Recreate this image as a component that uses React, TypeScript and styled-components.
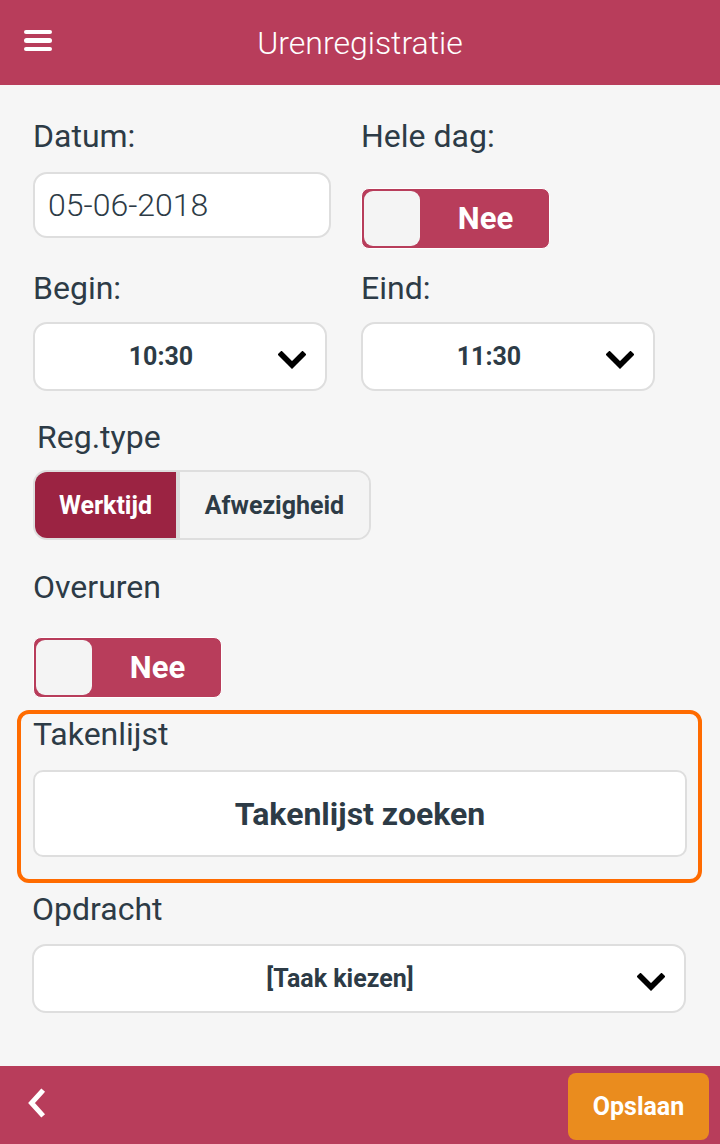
import React, { useState } from 'react'
import styled, { createGlobalStyle } from 'styled-components'

const GlobalStyle = createGlobalStyle`
  html, body {
    margin: 0;
    padding: 0;
    background: #f6f6f6;
    font-family: Roboto, "Noto Sans", sans-serif;
  }
  * { box-sizing: border-box; }
`

const Page = styled.div`
  display: flex;
  flex-direction: column;
  height: 1144px;
  width: 720px;
  color: #2d3b46;
`

const Header = styled.header`
  height: 85px;
  flex-shrink: 0;
  background: #b83d5b;
  display: flex;
  align-items: center;
  padding: 0 24px;
`

const MenuButton = styled.div`
  display: flex;
  flex-direction: column;
  gap: 4px;
  width: 28px;
  margin-top: -4px;
  span {
    display: block;
    height: 4.5px;
    border-radius: 3px;
    background: #fff;
  }
`

const Title = styled.h1`
  flex: 1;
  margin: 0 28px 0 0;
  text-align: center;
  color: #fff;
  font-weight: 300;
  font-size: 32px;
  line-height: 38px;
`

const Content = styled.main`
  flex: 1;
  padding-top: 32px;
`

const Grid = styled.div`
  display: grid;
  grid-template-columns: 294px 294px;
  column-gap: 34px;
  row-gap: 20px;
  padding: 0 33px;
`

const Field = styled.div`
  display: flex;
  flex-direction: column;
  align-items: flex-start;
`

const Label = styled.div<{ $indent?: number; $gap?: number }>`
  font-size: 32px;
  line-height: 38px;
  font-weight: 400;
  margin-bottom: ${p => p.$gap ?? 15}px;
  padding-left: ${p => p.$indent ?? 0}px;
`

const TextInput = styled.div`
  width: 298px;
  height: 66px;
  background: #fff;
  border: 2px solid #dedede;
  border-radius: 14px;
  padding: 0 13px;
  display: flex;
  align-items: center;
  font-size: 32px;
  font-weight: 300;
  color: #2d3b46;
`

const Toggle = styled.div<{ $top?: number }>`
  width: 189px;
  height: 61px;
  margin-top: ${p => p.$top ?? 0}px;
  border-radius: 8px;
  background: #b83d5b;
  border: 1px solid #fff;
  box-shadow: inset 0 0 0 2px #b83d5b;
  display: flex;
  align-items: center;
  padding: 2px;
`

const Knob = styled.div`
  width: 56px;
  height: 55px;
  border-radius: 9px;
  background: #f4f4f4;
`

const ToggleText = styled.div`
  flex: 1;
  text-align: center;
  color: #fff;
  font-weight: 700;
  font-size: 31px;
  padding-left: 4px;
`

const Select = styled.div`
  position: relative;
  align-self: stretch;
  height: 69px;
  background: #fff;
  border: 2px solid #dedede;
  border-radius: 14px;
  display: flex;
  align-items: center;
  justify-content: center;
  padding-right: 38px;
  font-size: 25px;
  font-weight: 700;
  color: #2d3b46;
  svg {
    position: absolute;
    right: 19px;
    top: 50%;
    margin-top: -6px;
  }
`

const Section = styled.div<{ $top: number }>`
  padding: 0 33px;
  margin-top: ${p => p.$top}px;
`

const Segmented = styled.div`
  display: inline-flex;
  height: 70px;
  border: 2px solid #dedede;
  border-radius: 14px;
  overflow: hidden;
  background: #f4f4f4;
`

const Segment = styled.div<{ $active?: boolean; $w: number }>`
  width: ${p => p.$w}px;
  display: flex;
  align-items: center;
  justify-content: center;
  font-size: 25px;
  font-weight: 700;
  cursor: pointer;
  background: ${p => (p.$active ? '#9b2342' : '#f4f4f4')};
  color: ${p => (p.$active ? '#fff' : '#2d3b46')};
  border-right: ${p => (p.$active ? '4px solid #dcdcdc' : 'none')};
`

const Highlight = styled.div`
  margin: 12px 18px 0 17px;
  border: 4px solid #ff6b00;
  border-radius: 12px;
  padding: 1px 11px 22px 12px;
`

const SearchButton = styled.div`
  height: 87px;
  background: #fff;
  border: 2px solid #dedede;
  border-radius: 10px;
  display: flex;
  align-items: center;
  justify-content: center;
  font-size: 32px;
  font-weight: 700;
  color: #2d3b46;
`

const Footer = styled.footer`
  height: 78px;
  flex-shrink: 0;
  background: #b83d5b;
  display: flex;
  align-items: center;
  justify-content: space-between;
  padding: 0 11px 0 26px;
`

const SaveButton = styled.div`
  width: 141px;
  height: 67px;
  border-radius: 8px;
  background: #ea8c1e;
  color: #fff;
  font-size: 25px;
  font-weight: 700;
  display: flex;
  align-items: center;
  justify-content: center;
  margin-top: 2px;
`

const Chevron = () => (
  <svg width="28" height="18" viewBox="0 0 28 18">
    <path d="M3.5 3.5 L14 14 L24.5 3.5" fill="none" stroke="#000" strokeWidth="5.5" strokeLinecap="square" />
  </svg>
)

const BackIcon = () => (
  <svg width="22" height="30" viewBox="0 0 22 30" style={{ marginTop: -4 }}>
    <path d="M15.5 4 L5.5 15 L15.5 26" fill="none" stroke="#fff" strokeWidth="5" strokeLinecap="square" />
  </svg>
)

export default function App() {
  const [regType, setRegType] = useState<'werk' | 'afw'>('werk')

  return (
    <>
      <GlobalStyle />
      <Page>
        <Header>
          <MenuButton>
            <span />
            <span />
            <span />
          </MenuButton>
          <Title>Urenregistratie</Title>
        </Header>

        <Content>
          <Grid>
            <Field>
              <Label $gap={17}>Datum:</Label>
              <TextInput>05-06-2018</TextInput>
            </Field>
            <Field>
              <Label $gap={17}>Hele dag:</Label>
              <Toggle $top={16}>
                <Knob />
                <ToggleText>Nee</ToggleText>
              </Toggle>
            </Field>
            <Field>
              <Label $gap={15}>Begin:</Label>
              <Select>
                10:30
                <Chevron />
              </Select>
            </Field>
            <Field>
              <Label $gap={15}>Eind:</Label>
              <Select>
                11:30
                <Chevron />
              </Select>
            </Field>
          </Grid>

          <Section $top={27}>
            <Label $indent={4} $gap={14}>Reg.type</Label>
            <Segmented>
              <Segment $w={145} $active={regType === 'werk'} onClick={() => setRegType('werk')}>Werktijd</Segment>
              <Segment $w={189} $active={regType === 'afw'} onClick={() => setRegType('afw')}>Afwezigheid</Segment>
            </Segmented>
          </Section>

          <Section $top={28}>
            <Label $gap={31}>Overuren</Label>
            <Toggle>
              <Knob />
              <ToggleText>Nee</ToggleText>
            </Toggle>
          </Section>

          <Highlight>
            <Label $gap={17}>Takenlijst</Label>
            <SearchButton>Takenlijst zoeken</SearchButton>
          </Highlight>

          <Section $top={7} style={{ paddingLeft: 32, paddingRight: 34 }}>
            <Label $gap={16}>Opdracht</Label>
            <Select>
              [Taak kiezen]
              <Chevron />
            </Select>
          </Section>
        </Content>

        <Footer>
          <BackIcon />
          <SaveButton>Opslaan</SaveButton>
        </Footer>
      </Page>
    </>
  )
}
